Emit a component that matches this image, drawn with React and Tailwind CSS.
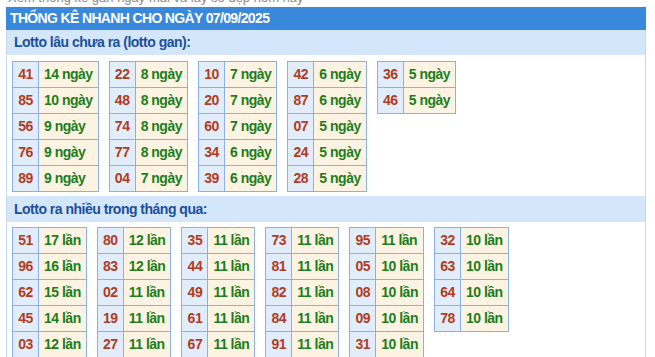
const gan = [
  [["41", "14 ngày"], ["85", "10 ngày"], ["56", "9 ngày"], ["76", "9 ngày"], ["89", "9 ngày"]],
  [["22", "8 ngày"], ["48", "8 ngày"], ["74", "8 ngày"], ["77", "8 ngày"], ["04", "7 ngày"]],
  [["10", "7 ngày"], ["20", "7 ngày"], ["60", "7 ngày"], ["34", "6 ngày"], ["39", "6 ngày"]],
  [["42", "6 ngày"], ["87", "6 ngày"], ["07", "5 ngày"], ["24", "5 ngày"], ["28", "5 ngày"]],
  [["36", "5 ngày"], ["46", "5 ngày"]],
];

const nhieu = [
  [["51", "17 lần"], ["96", "16 lần"], ["62", "15 lần"], ["45", "14 lần"], ["03", "12 lần"]],
  [["80", "12 lần"], ["83", "12 lần"], ["02", "11 lần"], ["19", "11 lần"], ["27", "11 lần"]],
  [["35", "11 lần"], ["44", "11 lần"], ["49", "11 lần"], ["61", "11 lần"], ["67", "11 lần"]],
  [["73", "11 lần"], ["81", "11 lần"], ["82", "11 lần"], ["84", "11 lần"], ["91", "11 lần"]],
  [["95", "11 lần"], ["05", "10 lần"], ["08", "10 lần"], ["09", "10 lần"], ["31", "10 lần"]],
  [["32", "10 lần"], ["63", "10 lần"], ["64", "10 lần"], ["78", "10 lần"]],
];

function LotoTable({ rows }) {
  return (
    <table className="border-collapse border border-[#8eb0df]">
      <tbody>
        {rows.map(([num, count]) => (
          <tr key={num} className="h-[26px]">
            <td className="border border-[#8eb0df] bg-[#e1edfb] w-[26px] px-[5px] text-center text-[#b03c22] font-bold">{num}</td>
            <td className="border border-[#8eb0df] bg-[#fdf3e2] px-[5px] text-[#1c7d1c] font-bold whitespace-nowrap">{count}</td>
          </tr>
        ))}
      </tbody>
    </table>
  );
}

export default function App() {
  return (
    <div className="w-[655px] h-[357px] overflow-hidden bg-white font-['Liberation_Sans',Arial,sans-serif]">
      <div className="h-[7px] overflow-hidden">
        <div className="-mt-[9px] pl-[8px] text-[13px] text-[#8a8a8a] leading-[14px]">Xem thống kê gan ngày mai và lấy số đẹp hôm nay</div>
      </div>
      <div className="ml-[6px] w-[640px] border-x border-[#c8d7ea] pb-4">
        <div className="h-[23px] bg-[#3a88dc] -mx-px px-[4px] flex items-center text-white font-bold text-[14px] tracking-[-0.65px]">
          THỐNG KÊ NHANH CHO NGÀY 07/09/2025
        </div>
        <div className="h-[25px] bg-[#d4e7fa] px-[7px] flex items-center text-[#1b4f9c] font-bold text-[14px] tracking-[-0.5px]">
          Lotto lâu chưa ra (lotto gan):
        </div>
        <div className="flex items-start gap-[10px] px-[5px] pt-[6px] text-[14px] tracking-[-0.5px]">
          {gan.map((rows, i) => <LotoTable key={i} rows={rows} />)}
        </div>
        <div className="mt-[4px] h-[26px] bg-[#d4e7fa] px-[7px] flex items-center text-[#1b4f9c] font-bold text-[14px] tracking-[-0.5px]">
          Lotto ra nhiều trong tháng qua:
        </div>
        <div className="flex items-start gap-[10px] px-[5px] pt-[5px] text-[14px] tracking-[-0.5px]">
          {nhieu.map((rows, i) => <LotoTable key={i} rows={rows} />)}
        </div>
      </div>
    </div>
  );
}
